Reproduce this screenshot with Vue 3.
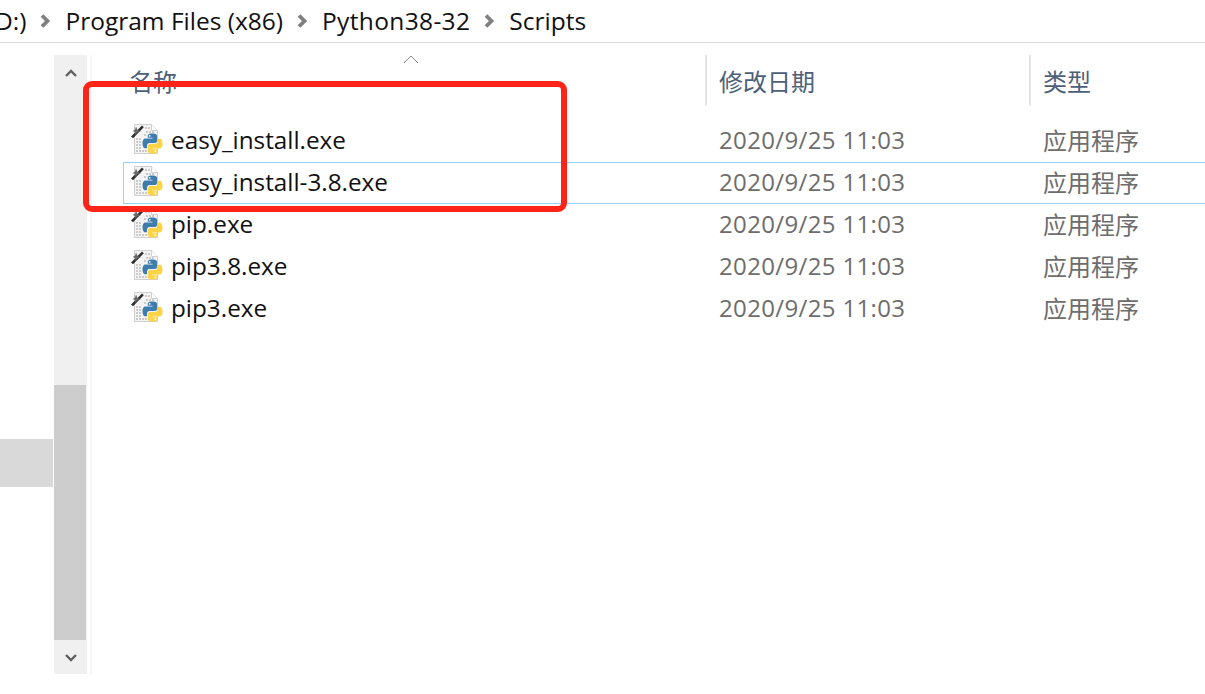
<script setup>
const files = [
  { name: 'easy_install.exe' },
  { name: 'easy_install-3.8.exe', selected: true },
  { name: 'pip.exe' },
  { name: 'pip3.8.exe' },
  { name: 'pip3.exe' }
]
const crumbs = ['Program Files (x86)', 'Python38-32', 'Scripts']
</script>

<template>
  <div class="explorer">
    <header class="breadcrumb">
      <span class="crumb">D:)</span>
      <template v-for="c in crumbs" :key="c">
        <svg class="chevron" width="11" height="14" viewBox="0 0 11 14"><path d="M2 1.500l5.500 5.500-5.500 5.500" fill="none" stroke="#808080" stroke-width="3.800" /></svg>
        <span class="crumb">{{ c }}</span>
      </template>
    </header>

    <div class="body">
      <aside class="nav">
        <div class="nav-hover"></div>
      </aside>

      <div class="scrollbar">
        <button class="scroll-btn scroll-up" type="button">
          <svg width="12" height="9" viewBox="0 0 12 9"><path d="M1 7l5-5 5 5" fill="none" stroke="#606060" stroke-width="2.400" /></svg>
        </button>
        <div class="track">
          <div class="thumb"></div>
        </div>
        <button class="scroll-btn" type="button">
          <svg width="12" height="9" viewBox="0 0 12 9"><path d="M1 2l5 5 5-5" fill="none" stroke="#606060" stroke-width="2.400" /></svg>
        </button>
      </div>

      <main class="list">
        <div class="head">
          <div class="col col-name">
            名称
            <svg class="sort" width="16" height="9" viewBox="0 0 16 9"><path d="M1 8l7-7 7 7" fill="none" stroke="#8a8a8a" stroke-width="1" /></svg>
          </div>
          <div class="col col-sep">修改日期</div>
          <div class="col col-sep">类型</div>
        </div>

        <div class="rows">
          <div v-for="f in files" :key="f.name" class="row" :class="{ selected: f.selected }">
            <div class="cell-name">
              <svg class="file-icon" width="32" height="32" viewBox="0 0 32 32">
                <path d="M3.500 1.500h17l6 6v23h-23z" fill="#f4f4f4" stroke="#cfcfcf" />
                <path d="M20.500 1.500v6h6" fill="#fff" stroke="#cfcfcf" />
                <path d="M14 5h5M15 9h8M15 12h-2M5 16h6M5 19h6M5 22h6M5 25h6M5 28h15" stroke="#bdbdbd" stroke-width="1.300" stroke-dasharray="2 1" />
                <path d="M0 13.500L11 2.500l1.800 1.800L2 15.200z" fill="#2f2f2f" />
                <path d="M5 3.500l1.500 3.500 3.500 1.500-3.500.6L4.500 12 4 9 1.500 8 4 6.800z" fill="#6a6a6a" />
                <g transform="translate(11.500 10.500)">
                  <path d="M9.800 0C5 0 5.300 2 5.300 2v2.200H10V5H3.200S0 4.600 0 9.800s2.800 5 2.800 5h1.700v-2.400s-.1-2.800 2.700-2.800H12s2.600 0 2.600-2.600V2.600S15 0 9.800 0z" fill="#3f7cae" />
                  <path d="M10.200 20c4.800 0 4.500-2 4.500-2v-2.200H10V15h6.800s3.200.4 3.200-4.800-2.800-5-2.800-5h-1.700v2.400s.1 2.800-2.700 2.800H8s-2.600 0-2.600 2.600v4.400S5 20 10.200 20z" fill="#fdd445" />
                  <circle cx="7.200" cy="2.300" r=".9" fill="#fff" />
                  <circle cx="12.800" cy="17.700" r=".9" fill="#fff" />
                </g>
              </svg>
              <span class="fname">{{ f.name }}</span>
            </div>
            <div class="cell cell-date">2020/9/25 11:03</div>
            <div class="cell cell-type">应用程序</div>
          </div>
        </div>
      </main>
    </div>

    <div class="annotation"></div>
  </div>
</template>

<style>
html,
body {
  margin: 0;
  background: #fff;
  overflow: hidden;
}
</style>

<style scoped>
.explorer {
  position: relative;
  width: 1205px;
  height: 694px;
  overflow: hidden;
  font-family: 'Open Sans', 'Noto Sans CJK SC', sans-serif;
  background: #fff;
}

.breadcrumb {
  height: 42px;
  border-bottom: 1px solid #dcdcdc;
  display: flex;
  align-items: center;
  margin-left: -5px;
  font-size: 24.500px;
  line-height: 40px;
  color: #111;
  white-space: nowrap;
}

.crumb:nth-of-type(3) {
  letter-spacing: 0.350px;
}

.chevron {
  margin: 0 14px;
}

.body {
  display: flex;
  height: 619px;
  margin-top: 12px;
}

.nav {
  width: 53px;
  flex: none;
  padding-top: 384px;
}

.nav-hover {
  height: 48px;
  background: #d9d9d9;
}

.scrollbar {
  width: 33px;
  margin-left: 1px;
  flex: none;
  background: #f0f0f0;
  display: flex;
  flex-direction: column;
}

.scroll-btn {
  height: 34px;
  padding: 0;
  border: 0;
  background: none;
  display: grid;
  place-items: center;
}

.scroll-up {
  padding-top: 3px;
}

.track {
  flex: 1;
  padding-top: 296px;
}

.thumb {
  width: 32px;
  height: 255px;
  background: #cdcdcd;
}

.list {
  flex: 1;
  margin-left: 3px;
  border-left: 2px solid #f6f6f6;
  padding-left: 32px;
  min-width: 0;
}

.head {
  display: grid;
  grid-template-columns: 581px 324px 1fr;
  height: 51px;
  font-size: 24px;
  color: #4c607a;
}

.col {
  position: relative;
  padding-top: 10px;
  line-height: 33px;
  padding-left: 5px;
}

.col-sep {
  border-left: 2px solid #e5e5e5;
  padding-left: 12px;
}

.sort {
  position: absolute;
  left: 279px;
  top: 0;
}

.rows {
  padding-top: 14px;
  margin-left: -1px;
}

.row {
  display: grid;
  grid-template-columns: 589px 324px 1fr;
  height: 42px;
  box-sizing: border-box;
  align-items: center;
  font-size: 24px;
  border: 1px solid transparent;
  border-right: 0;
  padding-left: 6px;
  white-space: nowrap;
}

.row.selected {
  border-color: #99d1ff;
}

.cell-name {
  display: flex;
  align-items: center;
  gap: 7px;
  margin-left: 1px;
}

.file-icon {
  flex: none;
  margin-bottom: 4px;
}

.fname {
  color: #111;
  font-size: 24.300px;
  margin: -4px 0 0 1px;
}

.cell {
  color: #6d6d6d;
}

.cell-date {
  letter-spacing: 0.350px;
  margin-top: -4px;
}

.cell-type {
  margin-top: -3px;
}

.annotation {
  position: absolute;
  left: 83px;
  top: 81px;
  width: 484px;
  height: 131px;
  box-sizing: border-box;
  border: 6px solid #ff2418;
  border-radius: 9px;
}
</style>
